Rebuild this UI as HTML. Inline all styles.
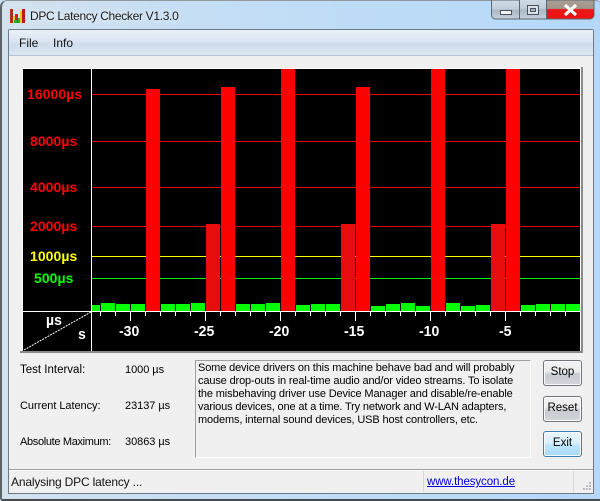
<!DOCTYPE html>
<html><head><meta charset="utf-8">
<style>
html,body{margin:0;padding:0}
body{width:600px;height:501px;overflow:hidden;position:relative;background:#c9e0f4;font-family:"Liberation Sans",sans-serif;color:#000}
div,span,a{position:absolute;white-space:nowrap}
.frame{left:0;top:0;width:602px;height:499px;border-left:2px solid #5e6468;border-top:1px solid #8f989f;border-bottom:2px solid #444a4e;box-sizing:border-box;height:501px;border-radius:7px 7px 0 3px;background:linear-gradient(90deg,#d4e2ee 0,#c6def4 30%,#bedcf7 60%,#b5d8f8 100%)}
.client{left:8px;top:29px;width:584px;height:463px;border:1px solid #6e7a86;background:#f0f0f0;border-radius:2px 2px 0 0}
.menu{left:9px;top:30px;width:584px;height:25px;background:linear-gradient(#e9f0f8 0,#dbe6f2 45%,#cfdceb 55%,#dbe6f1 100%);border-bottom:1px solid #b5c4d6}
.t{font-size:12px;line-height:14px}
.lbl{font-size:14px;font-weight:bold;line-height:14px;letter-spacing:.05px}
.info{font-size:11px;line-height:13px;left:198px;letter-spacing:-.14px}
.btn{left:543px;width:37px;height:24px;border:1px solid #70767c;border-radius:3px;background:linear-gradient(#f3f3f3 0,#ebebeb 45%,#c7cbd2 55%,#d2d5da 100%);font-size:11.500px;line-height:23px;text-align:center;box-shadow:inset 0 0 0 1px #fafafa}
.axis{color:#fff;font-size:14px;font-weight:bold;line-height:14px;transform:scaleY(1.05)}
.r{font-size:11px}
</style></head>
<body>
<div class="frame"></div>
<svg style="position:absolute;left:10px;top:8px" width="16" height="16" viewBox="0 0 16 16">
<rect x="0" y="1" width="3" height="14" fill="#b03020"/><rect x="3" y="8" width="2" height="7" fill="#e8d020"/><rect x="5" y="6" width="3" height="9" fill="#d02020"/><rect x="8" y="10" width="2" height="5" fill="#30b030"/><rect x="10" y="3" width="2" height="12" fill="#e8d020"/><rect x="12" y="1" width="3" height="14" fill="#c01818"/><rect x="4" y="12" width="3" height="3" fill="#20b040"/>
</svg>
<div class="t" style="left:30px;top:9px;color:#1a1a1a;font-size:12px;letter-spacing:-.32px;text-shadow:0 0 5px #fff">DPC Latency Checker V1.3.0</div>

<svg style="position:absolute;left:491px;top:0" width="104" height="20" viewBox="0 0 104 20">
<defs><linearGradient id="g" x1="0" y1="0" x2="0" y2="1"><stop offset="0" stop-color="#cfdbe6"/><stop offset=".45" stop-color="#c3d0dc"/><stop offset=".55" stop-color="#a9b6c4"/><stop offset="1" stop-color="#c6d2de"/></linearGradient>
<linearGradient id="r" x1="0" y1="0" x2="0" y2="1"><stop offset="0" stop-color="#a89e94"/><stop offset=".45" stop-color="#a0968c"/><stop offset=".5" stop-color="#e81818"/><stop offset="1" stop-color="#f01010"/></linearGradient></defs>
<path d="M.5 0V15a4 4 0 0 0 4 4H28.500V0Z" fill="url(#g)" stroke="#5c6670"/>
<rect x="28.500" y="-1" width="27" height="20" fill="url(#g)" stroke="#5c6670"/>
<path d="M55.500 0V19H99a4 4 0 0 0 4-4V0Z" fill="url(#r)" stroke="#5c6670"/>
<rect x="9.500" y="10.500" width="11" height="4" fill="#f4f6f8" stroke="#48525c"/>
<rect x="36.500" y="5.500" width="11" height="9" fill="#d8e0e8" stroke="#48525c"/><rect x="39.500" y="8.500" width="5" height="3" fill="#a8b4c0" stroke="#48525c"/>
<path d="M74 5 L85 15 M85 5 L74 15" stroke="#fff" stroke-width="3.200"/>
</svg>

<div class="client"></div>
<div class="menu"></div>
<div class="t" style="left:19px;top:36px;color:#111">File</div>
<div class="t" style="left:53px;top:36px;color:#111">Info</div>

<!-- chart -->
<svg style="position:absolute;left:0;top:0" width="600" height="360" viewBox="0 0 600 360" shape-rendering="crispEdges">
<rect x="21" y="68" width="560" height="1" fill="#fcfcfc"/>
<rect x="22" y="68" width="1" height="283" fill="#fcfcfc"/>
<rect x="580" y="68" width="1" height="283" fill="#fcfcfc"/>
<rect x="20" y="351" width="563" height="2" fill="#8a8a8a"/>
<rect x="581" y="67" width="2" height="286" fill="#8a8a8a"/>
<rect x="23" y="69" width="557" height="282" fill="#000"/>
<rect x="92" y="94" width="488" height="1" fill="#f00000"/>
<rect x="92" y="141" width="488" height="1" fill="#f00000"/>
<rect x="92" y="187" width="488" height="1" fill="#e80000"/>
<rect x="92" y="226" width="488" height="1" fill="#e00000"/>
<rect x="92" y="256" width="488" height="1" fill="#ffff00"/>
<rect x="92" y="278" width="488" height="1" fill="#00f000"/>
<g fill="#0f0">
<rect x="92" y="305" width="8" height="6"/><rect x="101" y="303" width="14" height="8"/><rect x="116" y="304" width="14" height="7"/><rect x="131" y="304" width="14" height="7"/>
<rect x="161" y="304" width="14" height="7"/><rect x="176" y="304" width="14" height="7"/><rect x="191" y="303" width="14" height="8"/>
<rect x="236" y="304" width="14" height="7"/><rect x="251" y="304" width="14" height="7"/><rect x="266" y="303" width="14" height="8"/>
<rect x="296" y="305" width="14" height="6"/><rect x="311" y="304" width="14" height="7"/><rect x="326" y="304" width="14" height="7"/>
<rect x="371" y="306" width="14" height="5"/><rect x="386" y="304" width="14" height="7"/><rect x="401" y="303" width="14" height="8"/><rect x="416" y="306" width="14" height="5"/>
<rect x="446" y="303" width="14" height="8"/><rect x="461" y="306" width="14" height="5"/><rect x="476" y="305" width="14" height="6"/>
<rect x="521" y="305" width="14" height="6"/><rect x="536" y="304" width="14" height="7"/><rect x="551" y="304" width="14" height="7"/><rect x="566" y="304" width="14" height="7"/>
</g>
<g fill="#f00">
<rect x="146" y="89" width="14" height="222"/>
<rect x="221" y="87" width="14" height="224"/>
<rect x="281" y="69" width="14" height="242"/>
<rect x="356" y="87" width="14" height="224"/>
<rect x="431" y="69" width="14" height="242"/>
<rect x="506" y="69" width="14" height="242"/>
</g>
<g fill="#e80c0c">
<rect x="206" y="224" width="14" height="87"/>
<rect x="341" y="224" width="14" height="87"/>
<rect x="491" y="224" width="14" height="87"/>
</g>
<rect x="91" y="69" width="1" height="282" fill="#fff"/>
<rect x="23" y="311" width="557" height="1" fill="#fff"/>
<g fill="#fff">
<rect x="100" y="312" width="1" height="4"/><rect x="115" y="312" width="1" height="4"/><rect x="130" y="312" width="1" height="9"/><rect x="145" y="312" width="1" height="4"/>
<rect x="160" y="312" width="1" height="4"/><rect x="175" y="312" width="1" height="4"/><rect x="190" y="312" width="1" height="4"/><rect x="205" y="312" width="1" height="9"/>
<rect x="220" y="312" width="1" height="4"/><rect x="235" y="312" width="1" height="4"/><rect x="250" y="312" width="1" height="4"/><rect x="265" y="312" width="1" height="4"/>
<rect x="280" y="312" width="1" height="9"/><rect x="295" y="312" width="1" height="4"/><rect x="310" y="312" width="1" height="4"/><rect x="325" y="312" width="1" height="4"/>
<rect x="340" y="312" width="1" height="4"/><rect x="355" y="312" width="1" height="9"/><rect x="370" y="312" width="1" height="4"/><rect x="385" y="312" width="1" height="4"/>
<rect x="400" y="312" width="1" height="4"/><rect x="415" y="312" width="1" height="4"/><rect x="430" y="312" width="1" height="9"/><rect x="445" y="312" width="1" height="4"/>
<rect x="460" y="312" width="1" height="4"/><rect x="475" y="312" width="1" height="4"/><rect x="490" y="312" width="1" height="4"/><rect x="505" y="312" width="1" height="9"/>
<rect x="520" y="312" width="1" height="4"/><rect x="535" y="312" width="1" height="4"/><rect x="550" y="312" width="1" height="4"/><rect x="565" y="312" width="1" height="4"/>
</g>
<path d="M24 350 L91 312" stroke="#fff" stroke-width="1" stroke-dasharray="2 1" shape-rendering="auto" fill="none"/>
</svg>

<div class="lbl" style="left:27px;top:87px;color:#f00">16000µs</div>
<div class="lbl" style="left:30px;top:134px;color:#f00">8000µs</div>
<div class="lbl" style="left:30px;top:180px;color:#f00">4000µs</div>
<div class="lbl" style="left:30px;top:219px;color:#f00">2000µs</div>
<div class="lbl" style="left:30px;top:249px;color:#ff0">1000µs</div>
<div class="lbl" style="left:34px;top:271px;color:#0f0">500µs</div>

<div class="axis" style="left:46px;top:313px">µs</div>
<div class="axis" style="left:78px;top:327px">s</div>
<div class="axis" style="left:119px;top:324px">-30</div>
<div class="axis" style="left:194px;top:324px">-25</div>
<div class="axis" style="left:269px;top:324px">-20</div>
<div class="axis" style="left:344px;top:324px">-15</div>
<div class="axis" style="left:419px;top:324px">-10</div>
<div class="axis" style="left:499px;top:324px">-5</div>

<!-- readouts -->
<div class="t r" style="left:20px;top:363px;font-size:11.500px">Test Interval:</div>
<div class="t r" style="left:125px;top:363px;letter-spacing:-.05px">1000 µs</div>
<div class="t r" style="left:20px;top:399px;letter-spacing:-.05px">Current Latency:</div>
<div class="t r" style="left:125px;top:399px;letter-spacing:-.05px">23137 µs</div>
<div class="t r" style="left:20px;top:435px;letter-spacing:-.33px">Absolute Maximum:</div>
<div class="t r" style="left:125px;top:435px;letter-spacing:-.05px">30863 µs</div>

<div style="left:195px;top:360px;width:334px;height:96px;border:1px solid;border-color:#a0a0a0 #fff #fff #a0a0a0"></div>
<div class="info" style="top:362px">Some device drivers on this machine behave bad and will probably</div>
<div class="info" style="top:375px">cause drop-outs in real-time audio and/or video streams. To isolate</div>
<div class="info" style="top:388px">the misbehaving driver use Device Manager and disable/re-enable</div>
<div class="info" style="top:401px">various devices, one at a time. Try network and W-LAN adapters,</div>
<div class="info" style="top:414px">modems, internal sound devices, USB host controllers, etc.</div>

<div class="btn" style="top:360px">Stop</div>
<div class="btn" style="top:396px">Reset</div>
<div class="btn" style="top:431px;border-color:#3c7fb1;background:linear-gradient(#eaf6fd 0,#d9f0fc 45%,#bee6fd 55%,#a7d9f5 100%)">Exit</div>

<!-- status bar -->
<div style="left:9px;top:469px;width:584px;height:1px;background:#a0a0a0"></div>
<div style="left:9px;top:470px;width:584px;height:1px;background:#fafafa"></div>
<div style="left:423px;top:471px;width:1px;height:21px;background:#d8d8d8"></div>
<div style="left:573px;top:471px;width:1px;height:21px;background:#d8d8d8"></div>
<div class="t" style="left:11px;top:475px;color:#111;letter-spacing:-.17px">Analysing DPC latency ...</div>
<a style="left:427px;top:475px;font-size:11.500px;line-height:14px;letter-spacing:-.1px;color:#0000e0;text-decoration:underline">www.thesycon.de</a>
<svg style="position:absolute;left:582px;top:481px" width="10" height="10" shape-rendering="crispEdges"><g fill="#b8bcc0"><rect x="7" y="1" width="2" height="2"/><rect x="4" y="4" width="2" height="2"/><rect x="7" y="4" width="2" height="2"/><rect x="1" y="7" width="2" height="2"/><rect x="4" y="7" width="2" height="2"/><rect x="7" y="7" width="2" height="2"/></g></svg>
</body></html>
